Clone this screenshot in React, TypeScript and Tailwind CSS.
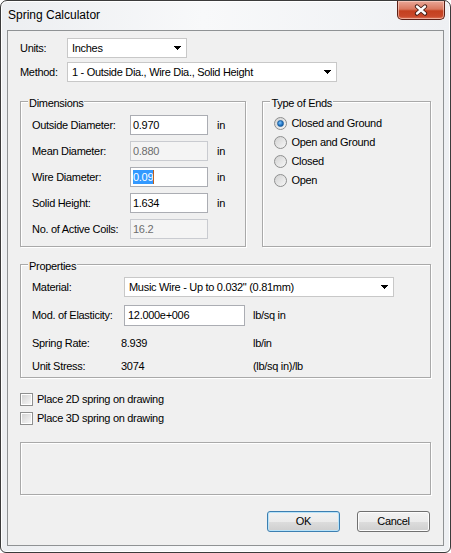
import React from "react";

function Arrow() {
  return (
    <svg width="7" height="4" viewBox="0 0 7 4" shapeRendering="crispEdges">
      <path d="M0 0H7L3.5 4Z" fill="#000" />
    </svg>
  );
}

function Combo({ className, text }: { className: string; text: string }) {
  return (
    <div
      className={
        "h-[20px] flex items-center justify-between bg-white border border-[#c8c8c8] pl-[4px] pr-[5px] " +
        className
      }
    >
      <span className="whitespace-nowrap">{text}</span>
      <Arrow />
    </div>
  );
}

function Input({
  className,
  text,
  disabled,
}: {
  className: string;
  text: React.ReactNode;
  disabled?: boolean;
}) {
  return (
    <div
      className={
        "h-[20px] flex items-center pl-[2px] border " +
        (disabled
          ? "border-[#c9cbd0] bg-[#f4f4f4] text-[#6d6d6d] "
          : "border-[#abadb3] bg-white text-black ") +
        className
      }
    >
      {text}
    </div>
  );
}

function Group({
  label,
  className,
  children,
}: {
  label: string;
  className: string;
  children?: React.ReactNode;
}) {
  return (
    <div
      className={
        "relative border border-[#a9a9a9] shadow-[inset_1px_1px_0_#ffffff,1px_1px_0_#ffffff] " +
        className
      }
    >
      <span className="absolute -top-[5px] left-[7px] px-[1px] bg-[#f0f0f0] leading-[13px]">
        {label}
      </span>
      {children}
    </div>
  );
}

function Radio({ checked, label }: { checked?: boolean; label: string }) {
  return (
    <div className="h-[19px] flex items-center">
      <div className="w-[13px] h-[13px] rounded-full border border-[#8e8f8f] bg-[linear-gradient(135deg,#d2d2d2,#f7f7f7)] flex items-center justify-center">
        {checked && (
          <div className="w-[7px] h-[7px] rounded-full bg-[radial-gradient(circle_at_40%_35%,#7fc7ff,#1e6fc0_60%,#0d4f91)] border border-[#1b5f9e]" />
        )}
      </div>
      <span className="ml-[4px]">{label}</span>
    </div>
  );
}

function Check({ label }: { label: string }) {
  return (
    <div className="h-[19px] flex items-center">
      <div className="w-[13px] h-[13px] border border-[#8e8f8f] bg-white p-[1px]">
        <div className="w-full h-full bg-[linear-gradient(135deg,#d4d4d4,#f6f6f6)]" />
      </div>
      <span className="ml-[4px]">{label}</span>
    </div>
  );
}

function DimRow({
  label,
  value,
  disabled,
  unit,
}: {
  label: string;
  value: React.ReactNode;
  disabled?: boolean;
  unit?: boolean;
}) {
  return (
    <div className="h-[20px] flex items-center">
      <span className="w-[98px] whitespace-nowrap">{label}</span>
      <Input className="w-[78px]" text={value} disabled={disabled} />
      {unit && <span className="ml-[9px]">in</span>}
    </div>
  );
}

export default function App() {
  return (
    <div className="w-[451px] h-[553px] overflow-hidden bg-white font-['Liberation_Sans',Arial,sans-serif] text-[11px] tracking-[-0.3px] text-black">
      <div className="w-full h-full flex flex-col border border-[#3b3b3b] rounded-t-[7px] rounded-b-[6px] px-[6px] pb-[6px] bg-[linear-gradient(90deg,#eceef1,#f8f9fa_45%,#eef0f3)] shadow-[inset_0_0_0_1px_#ffffff]">
        {/* Title bar */}
        <div className="h-[29px] flex items-start shrink-0">
          <span className="self-center pl-[1px] -mt-[1px] text-[12px] tracking-normal text-black">
            Spring Calculator
          </span>
          <div className="ml-auto -mr-[1px] w-[48px] h-[19px] rounded-b-[5px] border border-t-0 border-[#5b2016] bg-[linear-gradient(#e9a797_0%,#d9785f_45%,#c4401f_55%,#c9482a_85%,#e07a5c_100%)] shadow-[inset_0_0_0_1px_rgba(255,220,210,0.55)] flex items-center justify-center">
            <svg width="14" height="12" viewBox="0 0 14 12">
              <path
                d="M3 2.5L11 9.5M11 2.5L3 9.5"
                stroke="#3f1a12"
                strokeWidth="4.2"
                strokeLinecap="round"
              />
              <path
                d="M3 2.5L11 9.5M11 2.5L3 9.5"
                stroke="#ffffff"
                strokeWidth="2.4"
                strokeLinecap="round"
              />
            </svg>
          </div>
        </div>

        {/* Client area */}
        <div className="flex-1 border border-[#8f9294] bg-[#f0f0f0] pl-[12px] flex flex-col">
          <div className="w-[411px] flex flex-col">
            <div className="mt-[7px] h-[20px] flex items-center">
              <span className="w-[47px]">Units:</span>
              <Combo className="w-[120px]" text="Inches" />
            </div>
            <div className="mt-[4px] h-[20px] flex items-center">
              <span className="w-[47px]">Method:</span>
              <Combo
                className="w-[270px]"
                text="1 - Outside Dia., Wire Dia., Solid Height"
              />
            </div>

            <div className="mt-[19px] flex">
              <Group label="Dimensions" className="w-[227px] h-[146px] pt-[13px] pl-[11px]">
                <div className="flex flex-col gap-[6px]">
                  <DimRow label="Outside Diameter:" value="0.970" unit />
                  <DimRow label="Mean Diameter:" value="0.880" disabled unit />
                  <DimRow
                    label="Wire Diameter:"
                    value={
                      <span className="flex items-center">
                        <span className="bg-[#3399ff] text-white leading-[14px]">0.09</span>
                        <span className="w-[1px] h-[14px] bg-[#c0601a]" />
                      </span>
                    }
                    unit
                  />
                  <DimRow label="Solid Height:" value="1.634" unit />
                  <DimRow label="No. of Active Coils:" value="16.2" disabled />
                </div>
              </Group>
              <Group label="Type of Ends" className="ml-[16px] w-[169px] h-[146px] pt-[12px] pl-[11px]">
                <Radio checked label="Closed and Ground" />
                <Radio label="Open and Ground" />
                <Radio label="Closed" />
                <Radio label="Open" />
              </Group>
            </div>

            <Group label="Properties" className="mt-[17px] w-[411px] h-[114px] pt-[12px] pl-[11px]">
              <div className="h-[20px] flex items-center">
                <span className="w-[92px]">Material:</span>
                <Combo className="w-[270px]" text={'Music Wire - Up to 0.032" (0.81mm)'} />
              </div>
              <div className="mt-[8px] h-[21px] flex items-center">
                <span className="w-[92px] whitespace-nowrap">Mod. of Elasticity:</span>
                <Input className="w-[121px] h-[21px] pl-[3px]" text="12.000e+006" />
                <span className="ml-[8px]">lb/sq in</span>
              </div>
              <div className="mt-[7px] h-[20px] flex items-center">
                <span className="w-[89px]">Spring Rate:</span>
                <span className="w-[132px]">8.939</span>
                <span>lb/in</span>
              </div>
              <div className="mt-[3px] h-[20px] flex items-center">
                <span className="w-[89px]">Unit Stress:</span>
                <span className="w-[132px]">3074</span>
                <span>(lb/sq in)/lb</span>
              </div>
            </Group>

            <div className="mt-[12px] flex flex-col">
              <Check label="Place 2D spring on drawing" />
              <Check label="Place 3D spring on drawing" />
            </div>

            <div className="mt-[14px] w-[411px] h-[53px] border border-[#a9a9a9] shadow-[inset_1px_1px_0_#ffffff,1px_1px_0_#ffffff]" />

            <div className="mt-[16px] flex justify-end pr-[1px] gap-[17px]">
              <div className="w-[73px] h-[21px] rounded-[3px] border border-[#3c7fb1] bg-[linear-gradient(#f2f2f2_0%,#ebebeb_50%,#dddddd_51%,#cfcfcf_100%)] shadow-[inset_0_0_0_1px_#b9e3f9] flex items-center justify-center">
                OK
              </div>
              <div className="w-[73px] h-[21px] rounded-[3px] border border-[#707070] bg-[linear-gradient(#f2f2f2_0%,#ebebeb_50%,#dddddd_51%,#cfcfcf_100%)] shadow-[inset_0_0_0_1px_#fcfcfc] flex items-center justify-center">
                Cancel
              </div>
            </div>
          </div>
        </div>
      </div>
    </div>
  );
}
